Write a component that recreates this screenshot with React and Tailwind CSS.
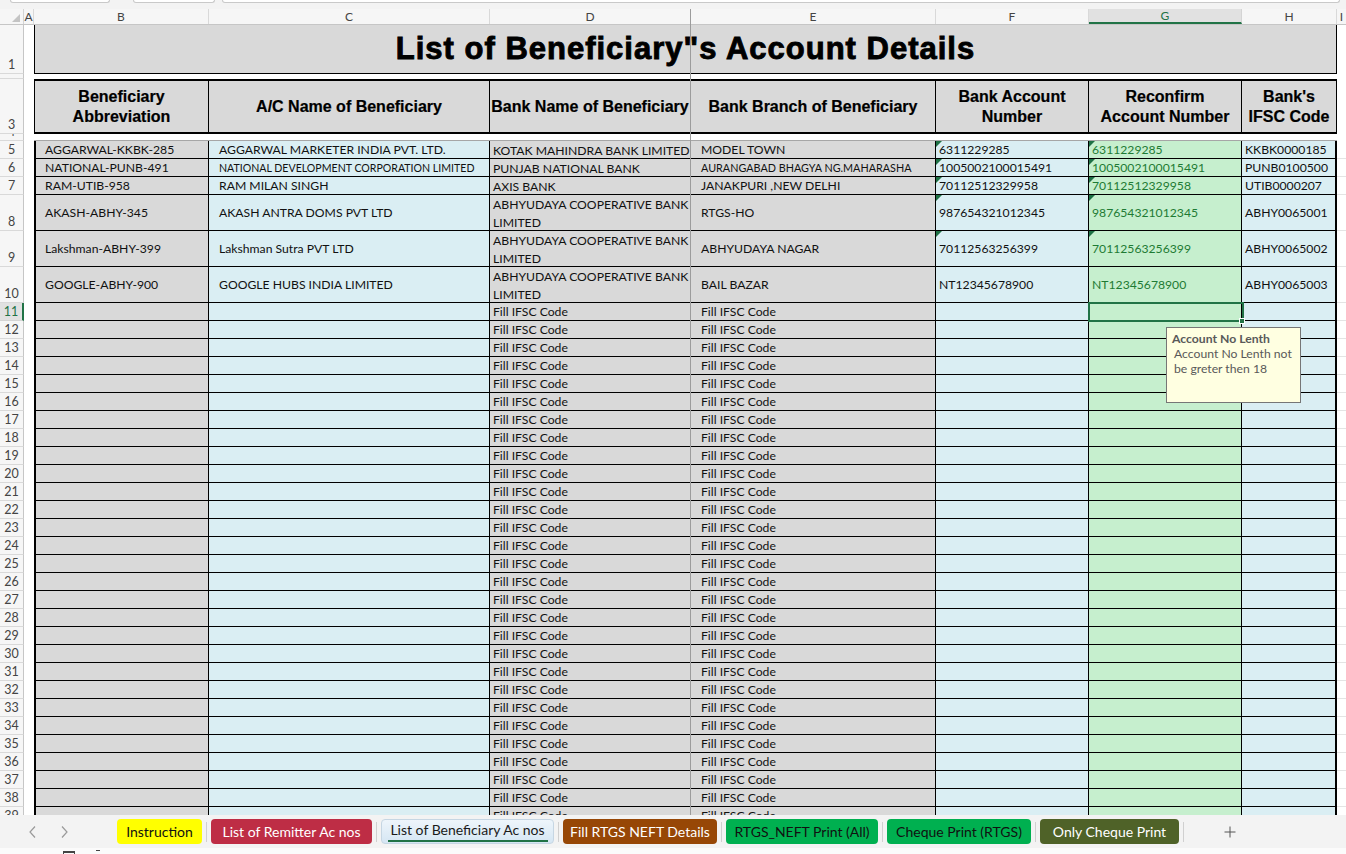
import React from "react";

const dataRows = [
  { n: 5, tall: false, b: "AGGARWAL-KKBK-285", c: "AGGARWAL MARKETER INDIA PVT. LTD.", d: ["KOTAK MAHINDRA BANK LIMITED"], e: "MODEL TOWN", f: "6311229285", h: "KKBK0000185", tri: true },
  { n: 6, tall: false, b: "NATIONAL-PUNB-491", c: "NATIONAL DEVELOPMENT CORPORATION LIMITED", cSmall: true, d: ["PUNJAB NATIONAL BANK"], e: "AURANGABAD BHAGYA NG.MAHARASHA", eSmall: true, f: "1005002100015491", h: "PUNB0100500", tri: true },
  { n: 7, tall: false, b: "RAM-UTIB-958", c: "RAM MILAN SINGH", d: ["AXIS BANK"], e: "JANAKPURI ,NEW DELHI", f: "70112512329958", h: "UTIB0000207", tri: true },
  { n: 8, tall: true, b: "AKASH-ABHY-345", c: "AKASH ANTRA DOMS PVT LTD", d: ["ABHYUDAYA COOPERATIVE BANK", "LIMITED"], e: "RTGS-HO", f: "987654321012345", h: "ABHY0065001", tri: true },
  { n: 9, tall: true, b: "Lakshman-ABHY-399", c: "Lakshman Sutra PVT LTD", d: ["ABHYUDAYA COOPERATIVE BANK", "LIMITED"], e: "ABHYUDAYA NAGAR", f: "70112563256399", h: "ABHY0065002", tri: true },
  { n: 10, tall: true, b: "GOOGLE-ABHY-900", c: "GOOGLE HUBS INDIA LIMITED", d: ["ABHYUDAYA COOPERATIVE BANK", "LIMITED"], e: "BAIL BAZAR", f: "NT12345678900", h: "ABHY0065003", tri: false },
];

const emptyRows = [];
for (let i = 11; i <= 39; i++) emptyRows.push(i);

function RowHead({ n, active }) {
  return (
    <div
      className={
        active
          ? "w-[24px] shrink-0 bg-[#e1e1e1] border-b border-b-[#d4d4d4] border-r-2 border-r-[#217346] flex items-end justify-center text-[12.5px] leading-[14px] text-[#217346] overflow-hidden"
          : "w-[24px] shrink-0 bg-[#f6f6f6] border-b border-b-[#d9d9d9] border-r border-r-[#c6c6c6] flex items-end justify-center text-[12.5px] leading-[14px] text-[#444] overflow-hidden"
      }
    >
      <span className="pb-[1px]">{n}</span>
    </div>
  );
}

function Tri() {
  return <div className="absolute left-0 top-0 w-0 h-0 border-t-[6px] border-t-[#1e7145] border-r-[6px] border-r-transparent" />;
}

function DataRow({ r }) {
  const hc = r.tall ? "h-[36px]" : "h-[18px]";
  return (
    <div className={`flex ${hc} shrink-0 text-[12.2px] text-[#111]`}>
      <RowHead n={r.n} />
      <div className="w-[10px] shrink-0 bg-white" />
      <div className="w-[175px] shrink-0 bg-[#d9d9d9] border-l-2 border-l-black border-b border-r border-black flex items-center pl-[9px] pt-[2px] whitespace-nowrap overflow-hidden">{r.b}</div>
      <div className={`w-[281px] shrink-0 bg-[#daeef3] border-b border-r border-black flex items-center pl-[10px] pt-[2px] whitespace-nowrap overflow-hidden ${r.cSmall ? "text-[10.6px]" : ""}`}>{r.c}</div>
      <div className="w-[201px] shrink-0 bg-[#d9d9d9] border-b border-black border-r border-r-[#a0a0a0] flex flex-col justify-center pl-[3px] pt-[2px] whitespace-nowrap overflow-hidden leading-[18px]">
        {r.d.map((t, i) => (
          <span key={i}>{t}</span>
        ))}
      </div>
      <div className={`w-[245px] shrink-0 bg-[#d9d9d9] border-b border-r border-black flex items-center pl-[10px] pt-[2px] whitespace-nowrap overflow-hidden ${r.eSmall ? "text-[10.8px]" : ""}`}>{r.e}</div>
      <div className="relative w-[153px] shrink-0 bg-[#daeef3] border-b border-r border-black flex items-center pl-[3px] pt-[2px] whitespace-nowrap overflow-hidden">
        {r.tri && <Tri />}
        {r.f}
      </div>
      <div className="relative w-[153px] shrink-0 bg-[#c6efce] border-b border-r border-black flex items-center pl-[3px] pt-[2px] whitespace-nowrap overflow-hidden text-[#1e7b34]">
        {r.tri && <Tri />}
        {r.f}
      </div>
      <div className="w-[95px] shrink-0 bg-[#daeef3] border-b border-r-2 border-black flex items-center pl-[3px] pt-[2px] whitespace-nowrap overflow-hidden">{r.h}</div>
      <div className="w-[9px] shrink-0 bg-white border-b border-b-[#e4e4e4]" />
    </div>
  );
}

function EmptyRow({ n }) {
  return (
    <div className="flex h-[18px] shrink-0 text-[12.2px] text-[#111]">
      <RowHead n={n} active={n === 11} />
      <div className="w-[10px] shrink-0 bg-white" />
      <div className="w-[175px] shrink-0 bg-[#d9d9d9] border-l-2 border-l-black border-b border-r border-black" />
      <div className="w-[281px] shrink-0 bg-[#daeef3] border-b border-r border-black" />
      <div className="w-[201px] shrink-0 bg-[#d9d9d9] border-b border-black border-r border-r-[#a0a0a0] flex items-center pl-[3px] pt-[2px] whitespace-nowrap">Fill IFSC Code</div>
      <div className="w-[245px] shrink-0 bg-[#d9d9d9] border-b border-r border-black flex items-center pl-[10px] pt-[2px] whitespace-nowrap">Fill IFSC Code</div>
      <div className="w-[153px] shrink-0 bg-[#daeef3] border-b border-r border-black" />
      <div className="w-[153px] shrink-0 bg-[#c6efce] border-b border-r border-black" />
      <div className="w-[95px] shrink-0 bg-[#daeef3] border-b border-r-2 border-black" />
      <div className="w-[9px] shrink-0 bg-white border-b border-b-[#e4e4e4]" />
    </div>
  );
}

function HeaderCell({ w, lines, first }) {
  return (
    <div
      className={`${w} shrink-0 bg-[#d9d9d9] border-t-2 border-b-2 border-r border-black ${first ? "border-l" : ""} flex flex-col items-center justify-center pt-[1px] font-['Liberation_Sans',Arial,sans-serif] font-bold text-[16px] leading-[20px] text-black whitespace-nowrap [-webkit-text-stroke:0.2px_black]`}
    >
      {lines.map((l, i) => (
        <span key={i}>{l}</span>
      ))}
    </div>
  );
}

function ColHead({ w, label, active }) {
  return (
    <div
      className={
        active
          ? `${w} shrink-0 bg-[#e1e1e1] border-r border-r-[#d4d4d4] border-b-2 border-b-[#217346] flex items-center justify-center text-[#217346]`
          : `${w} shrink-0 border-r border-r-[#d9d9d9] flex items-center justify-center`
      }
    >
      {label}
    </div>
  );
}

const tabs = [
  { label: "Instruction", w: "w-[85px]", cls: "bg-[#ffff00] text-[#111]" },
  { label: "List of Remitter Ac nos", w: "w-[161px]", cls: "bg-[#be2d45] text-white" },
  { label: "List of Beneficiary Ac nos", w: "w-[173px]", cls: "active" },
  { label: "Fill RTGS NEFT Details", w: "w-[154px]", cls: "bg-[#974706] text-white" },
  { label: "RTGS_NEFT Print (All)", w: "w-[152px]", cls: "bg-[#00b050] text-[#111]" },
  { label: "Cheque Print (RTGS)", w: "w-[144px]", cls: "bg-[#00b050] text-[#111]" },
  { label: "Only Cheque Print", w: "w-[139px]", cls: "bg-[#4f6228] text-white" },
];

export default function App() {
  return (
    <div className="relative w-[1346px] h-[854px] overflow-hidden bg-white font-['Lato','Open_Sans',sans-serif]">
      {/* top strip */}
      <div className="h-[9px] bg-[#f3f3f3] flex items-start">
        <div className="ml-[10px] w-[100px] h-[3px] bg-white border border-t-0 border-[#c9c9c9] rounded-b-[3px]" />
        <div className="ml-[23px] w-[82px] h-[3px] bg-white border border-t-0 border-[#c9c9c9] rounded-b-[3px]" />
        <div className="ml-[7px] w-[1118px] h-[3px] bg-white border border-t-0 border-[#c9c9c9] rounded-b-[3px]" />
      </div>

      {/* column headers */}
      <div className="flex h-[16px] bg-[#f6f6f6] border-b border-b-[#c6c6c6] text-[12px] text-[#444]">
        <div className="relative w-[24px] shrink-0 border-r border-r-[#d4d4d4]">
          <div className="absolute right-[3px] bottom-[2px] w-0 h-0 border-b-[8px] border-b-[#c4c4c4] border-l-[8px] border-l-transparent" />
        </div>
        <ColHead w="w-[10px]" label="A" />
        <ColHead w="w-[175px]" label="B" />
        <ColHead w="w-[281px]" label="C" />
        <ColHead w="w-[201px]" label="D" />
        <ColHead w="w-[245px]" label="E" />
        <ColHead w="w-[153px]" label="F" />
        <ColHead w="w-[153px]" label="G" active />
        <ColHead w="w-[95px]" label="H" />
        <div className="w-[9px] shrink-0 flex items-center justify-center">I</div>
      </div>

      {/* sheet body */}
      <div className="h-[790px] overflow-hidden flex flex-col">
        {/* row 1 title */}
        <div className="flex h-[49px] shrink-0">
          <RowHead n={1} />
          <div className="w-[10px] shrink-0" />
          <div className="w-[1303px] shrink-0 bg-[#d9d9d9] border-l border-r border-b border-black flex items-center justify-center pt-[1px] font-['Liberation_Sans',Arial,sans-serif] font-bold text-[31px] tracking-[1px] text-black [-webkit-text-stroke:0.9px_black]">
            List of Beneficiary"s Account Details
          </div>
          <div className="w-[9px] shrink-0" />
        </div>
        {/* row 2 */}
        <div className="flex h-[5px] shrink-0">
          <RowHead n={2} />
        </div>
        {/* row 3 header */}
        <div className="flex h-[55px] shrink-0">
          <RowHead n={3} />
          <div className="w-[10px] shrink-0" />
          <HeaderCell w="w-[175px]" lines={["Beneficiary", "Abbreviation"]} first />
          <HeaderCell w="w-[281px]" lines={["A/C Name of Beneficiary"]} />
          <HeaderCell w="w-[201px]" lines={["Bank Name of Beneficiary"]} />
          <HeaderCell w="w-[245px]" lines={["Bank Branch of Beneficiary"]} />
          <HeaderCell w="w-[153px]" lines={["Bank Account", "Number"]} />
          <HeaderCell w="w-[153px]" lines={["Reconfirm", "Account Number"]} />
          <HeaderCell w="w-[95px]" lines={["Bank's", "IFSC Code"]} />
        </div>
        {/* row 4 */}
        <div className="flex h-[7px] shrink-0">
          <RowHead n={4} />
          <div className="w-[10px] shrink-0" />
          <div className="w-[1303px] shrink-0 border-b border-b-[#a6a6a6]" />
        </div>
        {dataRows.map((r) => (
          <DataRow key={r.n} r={r} />
        ))}
        {emptyRows.map((n) => (
          <EmptyRow key={n} n={n} />
        ))}
      </div>

      {/* tab bar */}
      <div className="h-[33px] bg-[#f3f3f3] flex items-center text-[14px] leading-none">
        <div className="w-[117px] shrink-0 flex items-center pl-[28px] gap-[21px]">
          <svg width="10" height="14" viewBox="0 0 10 14" fill="none" stroke="#9a9a9a" strokeWidth="1.2">
            <path d="M7 1.5 L2 7 L7 12.5" />
          </svg>
          <svg width="10" height="14" viewBox="0 0 10 14" fill="none" stroke="#9a9a9a" strokeWidth="1.2">
            <path d="M3 1.5 L8 7 L3 12.5" />
          </svg>
        </div>
        {tabs.map((t, i) => (
          <React.Fragment key={t.label}>
            {i > 0 && <div className="w-[1px] h-[20px] bg-[#d0d0d0] mx-[4px] shrink-0" />}
            {t.cls === "active" ? (
              <div className={`${t.w} h-[25px] shrink-0 rounded-[4px] border border-[#c6d6e3] bg-gradient-to-b from-[#eef5fb] to-[#d5e6f3] flex flex-col items-center justify-center text-[#1a1a1a]`}>
                <span className="pt-[2px]">{t.label}</span>
                <span className="mt-[3px] w-[160px] h-[2px] bg-[#217346]" />
              </div>
            ) : (
              <div className={`${t.w} h-[25px] shrink-0 rounded-[4px] flex items-center justify-center pt-[1px] ${t.cls}`}>{t.label}</div>
            )}
          </React.Fragment>
        ))}
        <div className="w-[1px] h-[20px] bg-[#d0d0d0] mx-[4px] shrink-0" />
        <svg className="ml-[36px]" width="12" height="12" viewBox="0 0 12 12" stroke="#555" strokeWidth="1">
          <path d="M6 0.5 V11.5 M0.5 6 H11.5" />
        </svg>
      </div>
      {/* bottom strip */}
      <div className="h-[6px] bg-[#fbfbfb] relative">
        <div className="absolute left-[63px] top-[3px] w-[12px] h-[3px] border-t-2 border-x border-[#444]" />
        <div className="absolute left-[96px] top-[2px] w-[4px] h-[2px] border-t border-[#444]" />
      </div>

      {/* freeze pane line */}
      <div className="absolute left-[690px] top-[9px] w-[1px] h-[806px] bg-[#9c9c9c]" />

      {/* selected cell */}
      <div className="absolute left-[1088px] top-[302px] w-[156px] h-[20px] border-2 border-[#217346]" />
      <div className="absolute left-[1239px] top-[318px] w-[6px] h-[6px] bg-[#217346] border border-white" />

      {/* tooltip */}
      <div className="absolute left-[1166px] top-[327px] w-[135px] h-[76px] bg-[#ffffe1] border border-[#767676] px-[5px] pt-[3px] text-[12.2px] leading-[15px] text-[#595959]">
        <div className="font-bold">Account No Lenth</div>
        <div className="pl-[2px]">Account No Lenth not</div>
        <div className="pl-[2px]">be greter then 18</div>
      </div>
    </div>
  );
}
